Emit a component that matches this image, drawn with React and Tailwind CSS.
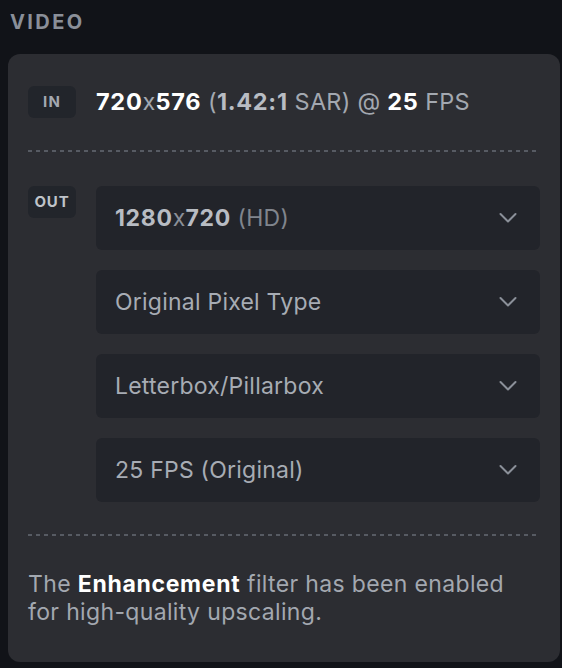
import React from "react";

function Chevron() {
  return (
    <svg width="20" height="20" viewBox="0 0 20 20" fill="none" stroke="#8b9099" strokeWidth="2" strokeLinecap="round" strokeLinejoin="round">
      <path d="M2.5 6l7.5 7.5 7.5-7.5" />
    </svg>
  );
}

function Select({ children }) {
  return (
    <div className="h-16 rounded-md bg-[#22242a] flex items-center justify-between pl-[19px] pr-[22px]">
      <div className="text-[23px] tracking-[0.01em] text-[#a7acb4]">{children}</div>
      <Chevron />
    </div>
  );
}

function Dashed() {
  return <div className="h-[2px] w-full bg-[linear-gradient(to_right,#575b63_50%,transparent_50%)] bg-[length:8px_2px] bg-repeat-x" />;
}

export default function App() {
  return (
    <div className="w-[562px] h-[668px] bg-[#111318] overflow-hidden" style={{ fontFamily: "Inter, 'Noto Sans', sans-serif" }}>
      <div className="h-[54px] pl-[10px] pt-[8px]">
        <div className="text-[20px] font-bold tracking-[0.12em] text-[#8a8f98] leading-[28px]">VIDEO</div>
      </div>
      <div className="ml-2 w-[552px] h-[608px] rounded-xl bg-[#2c2d32] px-5 pt-8">
        <div className="flex items-center gap-5 h-8">
          <div className="w-12 h-8 rounded-[6px] bg-[#22252b] flex items-center justify-center text-[15px] font-bold tracking-[0.08em] text-[#a3a8b0]">IN</div>
          <div className="text-[23.5px] leading-8 tracking-[0.01em] text-[#a3a8b0] whitespace-nowrap">
            <span className="font-bold text-white tracking-[0.03em]">720</span>x<span className="font-bold text-white tracking-[0.03em]">576</span> (<span className="font-bold text-[#b8bcc3] tracking-[0.03em]">1.42:1</span> SAR) @ <span className="font-bold text-white tracking-[0.03em]">25</span> FPS
          </div>
        </div>
        <div className="mt-8 mb-[34px]"><Dashed /></div>
        <div className="flex gap-5">
          <div className="w-12 h-8 rounded-[6px] bg-[#22252b] flex items-center justify-center text-[15px] font-bold tracking-[0.06em] text-[#bfc3c9] shrink-0">OUT</div>
          <div className="flex-1 flex flex-col gap-5">
            <Select>
              <span className="font-bold text-[#b8bcc3] tracking-[0.03em]">1280</span><span className="text-[#8a8f98]">x</span><span className="font-bold text-[#b8bcc3] tracking-[0.03em]">720</span> <span className="text-[#80858d]">(HD)</span>
            </Select>
            <Select>Original Pixel Type</Select>
            <Select>Letterbox/Pillarbox</Select>
            <Select>25 FPS (Original)</Select>
          </div>
        </div>
        <div className="mt-8 mb-[34px]"><Dashed /></div>
        <div className="text-[23px] tracking-[0.015em] leading-[28px] text-[#a3a8b0]">
          The <span className="font-bold text-white tracking-[0.03em]">Enhancement</span> filter has been enabled<br />for high-quality upscaling.
        </div>
      </div>
    </div>
  );
}
